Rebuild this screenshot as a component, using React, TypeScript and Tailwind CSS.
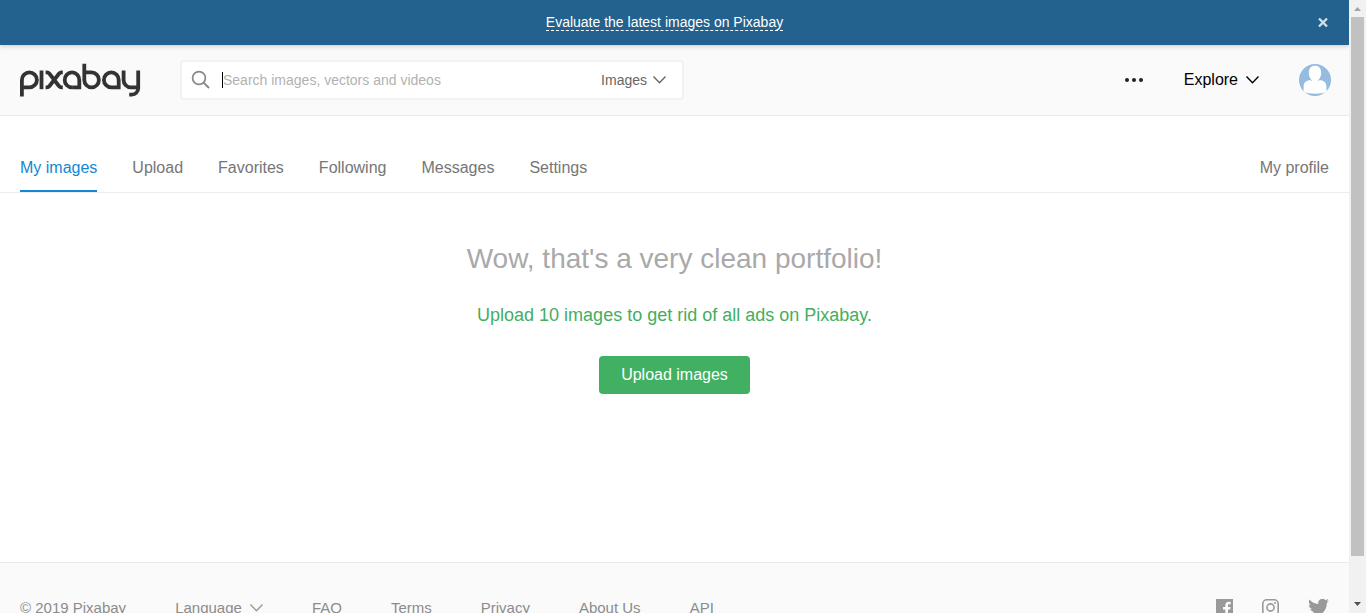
import React from "react";

const tabs = ["My images", "Upload", "Favorites", "Following", "Messages", "Settings"];
const footerLinks = ["FAQ", "Terms", "Privacy", "About Us", "API"];

function Chevron({ className = "" }: { className?: string }) {
  return (
    <svg className={className} width="13" height="8" viewBox="0 0 13 8" fill="none" stroke="currentColor" strokeWidth="1.4" aria-hidden="true">
      <path d="M.5.6 6.500 6.800 12.500.6" />
    </svg>
  );
}

function Logo() {
  return (
    <svg width="121" height="34" viewBox="0 0 121 34" fill="none" stroke="#333" strokeWidth="3.8" aria-hidden="true">
      <path d="M1.9 33.500V16.900a7.5 7.5 0 1 1 7.5 7.5H2" />
      <path d="M21.5 7.500v18.7" />
      <path d="M25.6 9.400h1.2c1.2 0 1.9.4 2.7 1.4l9.4 12.2c.8 1 1.5 1.4 2.7 1.4h1.2M42.8 9.400h-1.2c-1.2 0-1.9.4-2.7 1.4l-9.4 12.2c-.8 1-1.5 1.4-2.7 1.4h-1.2" />
      <path d="M52.1 24.400h7.2v-7.5a7.3 7.5 0 1 0-7.3 7.5" />
      <path d="M64.3 .800v16.100a7.3 7.5 0 1 0 7.3-7.5h-7.2" />
      <path d="M91.3 24.400h7.4v-7.5a7.4 7.5 0 1 0-7.4 7.5" />
      <path d="M103.6 7.500v9.4a7.3 7.5 0 0 0 7.3 7.5h7.2M118.2 7.500v17.8a6.3 6.3 0 0 1-6.3 6.3h-2.7" />
    </svg>
  );
}

function Avatar() {
  return (
    <svg width="32" height="32" viewBox="0 0 32 32" aria-hidden="true">
      <circle cx="16" cy="16" r="16" fill="#95bbdf" />
      <path fill="#fff" d="M16 1.800c3.800 0 6.200 2.600 6.200 6.600 0 4.600-2.600 9.200-6.200 9.200s-6.200-4.600-6.200-9.200c0-4 2.400-6.600 6.200-6.600z" />
      <path fill="#fff" d="M11.600 15.900c1.200 1.500 2.700 2.100 4.400 2.100s3.200-.6 4.400-2.100c4.800.5 7 2.500 7 7.100v5.100c-3.100 1.100-7 1.600-11.400 1.600s-8.300-.5-11.400-1.600V23c0-4.600 2.200-6.600 7-7.100z" />
      <path fill="#fff" d="M13 15.500h6v3.500h-6z" />
    </svg>
  );
}

function Banner() {
  return (
    <div className="relative flex h-[45px] shrink-0 items-center bg-[#23618e] px-5 shadow-[0_1px_5px_rgba(0,0,0,0.2)]">
      <div className="flex grow justify-center pr-2">
        <a href="#evaluate" className="border-b border-dashed border-white text-sm leading-4 text-white">
          Evaluate the latest images on Pixabay
        </a>
      </div>
      <button type="button" aria-label="Close" className="text-[#d3dfe8]">
        <svg width="12" height="12" viewBox="0 0 12 12" stroke="currentColor" strokeWidth="2.400" aria-hidden="true">
          <path d="m2 1.500 8 8M10 1.500l-8 8" />
        </svg>
      </button>
    </div>
  );
}

function Header() {
  return (
    <header className="flex h-[71px] shrink-0 items-center border-b border-[#ebebeb] bg-[#fafafa] pr-[18px] pl-5">
      <a href="#home" aria-label="Pixabay">
        <Logo />
      </a>
      <form role="search" className="ml-[39px] flex h-10 w-[504px] items-center rounded border-2 border-[#f2f2f2] bg-white pr-4 pl-[9px]">
        <button type="submit" aria-label="Search" className="text-[#888]">
          <svg width="20" height="20" viewBox="0 0 20 20" fill="none" stroke="currentColor" strokeWidth="1.700" aria-hidden="true">
            <circle cx="8" cy="8" r="6.400" />
            <path strokeWidth="2" d="m12.600 12.600 5.400 5.400" />
          </svg>
        </button>
        <span className="ml-[11px] h-4 w-px bg-black" />
        <input
          type="text"
          aria-label="Search images, vectors and videos"
          placeholder="Search images, vectors and videos"
          className="min-w-0 flex-1 bg-transparent text-sm text-[#555] outline-none placeholder:text-[#b2b2b2]"
        />
        <button type="button" className="flex items-center gap-[6px] text-sm text-[#666]">
          Images
          <Chevron />
        </button>
      </form>
      <div className="ml-auto flex items-center">
        <button type="button" aria-label="More" className="text-[#222]">
          <svg width="19" height="4" viewBox="0 0 19 4" fill="currentColor" aria-hidden="true">
            <circle cx="2" cy="2" r="2" />
            <circle cx="9" cy="2" r="2" />
            <circle cx="16" cy="2" r="2" />
          </svg>
        </button>
        <button type="button" className="ml-10 flex items-center gap-2 text-base text-black">
          Explore
          <Chevron />
        </button>
        <button type="button" aria-label="Account" className="ml-10">
          <Avatar />
        </button>
      </div>
    </header>
  );
}

function SocialLinks() {
  return (
    <div className="ml-auto flex items-start gap-[29px] text-[#999]">
      <a href="#facebook" aria-label="Facebook">
        <svg width="17" height="17" viewBox="0 0 17 17" fill="currentColor" aria-hidden="true">
          <path d="M0 0h17v17h-5v-6.400h2.200l.4-2.600H12V6.500c0-.8.300-1.300 1.300-1.300h1.400V2.900c-.3 0-1.100-.1-2-.1-2.100 0-3.400 1.200-3.400 3.500V8H7v2.600h2.300V17H0z" />
        </svg>
      </a>
      <a href="#instagram" aria-label="Instagram">
        <svg width="17" height="17" viewBox="0 0 17 17" fill="none" stroke="currentColor" strokeWidth="1.600" aria-hidden="true">
          <rect x=".8" y=".8" width="15.400" height="15.400" rx="4" />
          <circle cx="8.500" cy="8.500" r="3.600" />
          <circle cx="13" cy="4" r="1" fill="currentColor" stroke="none" />
        </svg>
      </a>
      <a href="#twitter" aria-label="Twitter">
        <svg width="21" height="17" viewBox="0 2.500 24 19.500" fill="currentColor" aria-hidden="true">
          <path d="M23.954 4.569c-.885.389-1.830.654-2.825.775 1.014-.611 1.794-1.574 2.163-2.723-.951.555-2.005.959-3.127 1.184-.896-.959-2.173-1.559-3.591-1.559-2.717 0-4.920 2.203-4.920 4.917 0 .390.045.765.127 1.124C7.691 8.094 4.066 6.130 1.640 3.161c-.427.722-.666 1.561-.666 2.475 0 1.710.870 3.213 2.188 4.096-.807-.026-1.566-.248-2.228-.616v.061c0 2.385 1.693 4.374 3.946 4.827-.413.111-.849.171-1.296.171-.314 0-.615-.030-.916-.086.631 1.953 2.445 3.377 4.604 3.417-1.680 1.319-3.809 2.105-6.102 2.105-.390 0-.779-.023-1.170-.067 2.189 1.394 4.768 2.209 7.557 2.209 9.054 0 13.999-7.496 13.999-13.986 0-.209 0-.420-.015-.630.961-.689 1.800-1.560 2.460-2.548z" />
        </svg>
      </a>
    </div>
  );
}

function ScrollTrack() {
  return (
    <div aria-hidden="true" className="flex w-[17px] shrink-0 flex-col items-center bg-[#f1f1f1]">
      <svg className="shrink-0" width="17" height="17" viewBox="0 0 17 17" fill="#a3a3a3">
        <path d="M5 11h7L8.500 7z" />
      </svg>
      <div className="w-[13px] grow bg-[#c1c1c1]" />
      <div className="h-10 shrink-0" />
      <svg className="shrink-0" width="17" height="17" viewBox="0 0 17 17" fill="#505050">
        <path d="M5 6h7l-3.500 4z" />
      </svg>
    </div>
  );
}

export default function App() {
  return (
    <div className="flex h-screen overflow-hidden bg-white font-['Liberation_Sans',Arial,sans-serif]">
      <div className="flex min-w-0 flex-1 flex-col overflow-hidden">
        <Banner />
        <Header />
        <nav className="flex shrink-0 items-end justify-between border-b border-[#ebebf0] px-5 pt-10 text-base text-[#767676]">
          <div className="flex gap-[35px]">
            {tabs.map((tab, i) => (
              <a
                key={tab}
                href="#tab"
                className={i === 0 ? "border-b-2 border-[#1288d3] pb-[10px] text-[#1288d3]" : "border-b-2 border-transparent pb-[10px]"}
              >
                {tab}
              </a>
            ))}
          </div>
          <a href="#profile" className="border-b-2 border-transparent pb-[10px]">
            My profile
          </a>
        </nav>
        <main className="flex grow flex-col items-center pt-12">
          <h1 className="text-[28px] leading-9 text-[#a9a9a9]">Wow, that's a very clean portfolio!</h1>
          <p className="mt-6 text-lg leading-7 text-[#43ae5f]">Upload 10 images to get rid of all ads on Pixabay.</p>
          <button type="button" className="mt-[27px] h-[38px] rounded bg-[#41b062] px-[22px] text-base text-white">
            Upload images
          </button>
        </main>
        <footer className="flex h-[51px] shrink-0 items-start border-t border-[#ebebeb] bg-[#fafafa] px-5 pt-9 text-[15px] leading-[18px] text-[#8c8c8c]">
          <span>© 2019 Pixabay</span>
          <button type="button" className="ml-[49px] flex items-center gap-2">
            Language
            <Chevron className="text-[#999]" />
          </button>
          <div className="ml-[49px] flex gap-[49px]">
            {footerLinks.map((link) => (
              <a key={link} href="#footer">
                {link}
              </a>
            ))}
          </div>
          <SocialLinks />
        </footer>
      </div>
      <ScrollTrack />
    </div>
  );
}
